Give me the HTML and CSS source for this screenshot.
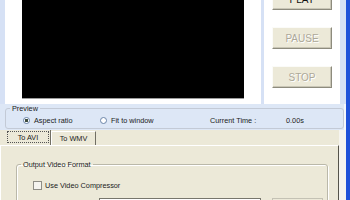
FILE: index.html
```html
<!DOCTYPE html>
<html>
<head>
<meta charset="utf-8">
<link rel="stylesheet" href="styles.css">
</head>
<body>
<div class="win">
  <div class="main">
    <div class="top">
      <div class="edge"></div>
      <div class="pad"></div>
      <div class="video-cell"><div class="video"></div></div>
      <div class="pad"></div>
      <div class="sep"></div>
      <div class="ctrl">
        <button class="btn play">PLAY</button>
        <button class="btn dis">PAUSE</button>
        <button class="btn dis">STOP</button>
      </div>
      <div class="edge2"></div>
    </div>
    <div class="preview-row">
      <fieldset class="group preview">
        <legend>Preview</legend>
        <div class="prev-grid">
          <div class="radio"><span class="rb on"></span><span>Aspect ratio</span></div>
          <div class="radio"><span class="rb"></span><span>Fit to window</span></div>
          <div class="ctime">Current Time :</div>
          <div class="cval">0.00s</div>
        </div>
      </fieldset>
    </div>
    <div class="lower">
      <div class="tabs-col">
        <div class="tab-row">
          <div class="tab tab-on"><div class="focus">To AVI</div></div>
          <div class="tab tab-off">To WMV</div>
        </div>
        <div class="panel">
          <fieldset class="group out">
            <legend>Output Video Format</legend>
            <div class="chk-row"><span class="chk"></span><span>Use Video Compressor</span></div>
            <div class="bottom-row">
              <div class="combo"></div>
              <div class="sbtn"></div>
            </div>
          </fieldset>
        </div>
      </div>
      <div class="side"></div>
    </div>
  </div>
  <div class="frame"></div>
</div>
</body>
</html>
```

FILE: styles.css
```css
* { box-sizing: border-box; }
html, body { margin: 0; padding: 0; }
body {
  width: 350px;
  height: 200px;
  overflow: hidden;
  font-family: "Liberation Sans", Arial, sans-serif;
  font-size: 7.3px;
  color: #1b1b1b;
  background: #ece9d8;
}
.win { display: flex; height: 200px; }
.main { width: 346px; display: flex; flex-direction: column; }
.frame { width: 4px; background: #1f52d9; }

.top { display: flex; height: 104px; background: #fff; flex: none; }
.edge { width: 5px; background: #d6e1f5; }
.pad { width: 17px; }
.video-cell { width: 222px; }
.video { height: 99px; background: #000; border-bottom: 1px solid #9c9c9c; }
.sep { width: 3px; background: #d6e1f5; }
.ctrl {
  width: 76px;
  display: flex;
  flex-direction: column;
  gap: 17px;
  padding-left: 8px;
}
.edge2 { width: 6px; background: #d6e1f5; }

.btn {
  width: 60px;
  height: 22px;
  padding: 0;
  font-family: "Liberation Sans", Arial, sans-serif;
  font-size: 10px;
  background: #ece9d8;
  border: 1px solid;
  border-color: #fbfbf8 #8d8b7d #8d8b7d #fbfbf8;
  box-shadow: inset -1px -1px 0 #c9c6b6;
  color: #111;
}
.play { margin-top: -12px; }
.dis { color: #aca899; text-shadow: 1px 1px 0 #fff; }

.preview-row {
  height: 26px;
  flex: none;
  background: #dde7f6;
  padding-left: 5px;
  border-right: 2px solid #f4f7fc;
}
.group {
  margin: 0;
  padding: 0;
  min-width: 0;
  border: 1px solid #c3cad6;
  border-radius: 3px;
}
.group legend {
  padding: 0 2px;
  margin-left: 4px;
  line-height: 9px;
  font-size: 7.3px;
}
.preview { height: 25px; }
.prev-grid {
  display: grid;
  grid-template-columns: 77px 110px 76px auto;
  height: 15px;
  align-items: center;
  padding-left: 17px;
}
.radio { display: flex; align-items: center; gap: 4px; }
.rb {
  width: 7px;
  height: 7px;
  border-radius: 50%;
  border: 1px solid #6a84a8;
  background: #fff;
}
.rb.on { background: radial-gradient(circle, #3c4a3c 0 1.4px, #fff 1.9px); }

.lower { flex: 1; display: flex; }
.tabs-col { width: 339px; display: flex; flex-direction: column; }
.side { flex: 1; background: #f6f5f0; }
.tab-row { display: flex; height: 15px; padding-left: 6px; flex: none; }
.tab {
  width: 45px;
  display: flex;
  align-items: center;
  justify-content: center;
}
.tab-on { border-right: 1px solid #716f64; padding: 1px 1px 2px 1px; }
.focus {
  width: 100%;
  height: 100%;
  border: 1px dotted #555;
  display: flex;
  align-items: center;
  justify-content: center;
}
.tab-off {
  border-left: 1px solid #fff;
  border-right: 1px solid #716f64;
  border-top: 1px solid #fff;
  margin-top: 1px;
}
.panel {
  flex: 1;
  border-top: 1px solid #fff;
  border-left: 1px solid #fff;
  border-right: 1px solid #55534a;
  padding: 14px 10px 0 15px;
}
.out {
  height: 60px;
  border-color: #bab8a9;
  box-shadow: 1px 1px 0 #fff, inset 1px 1px 0 #fff;
}
.chk-row {
  display: flex;
  align-items: center;
  gap: 3px;
  height: 9px;
  margin: 12px 0 0 16px;
}
.chk {
  width: 9px;
  height: 9px;
  border: 1px solid #8f8e86;
  background: #f5f4ef;
}
.bottom-row { display: flex; gap: 11px; margin: 8px 0 0 82px; }
.combo { width: 162px; height: 20px; border: 1px solid #77766c; background: #fff; }
.sbtn { width: 51px; height: 20px; border: 1px solid #c4c2b4; background: #ece9d8; }
```
